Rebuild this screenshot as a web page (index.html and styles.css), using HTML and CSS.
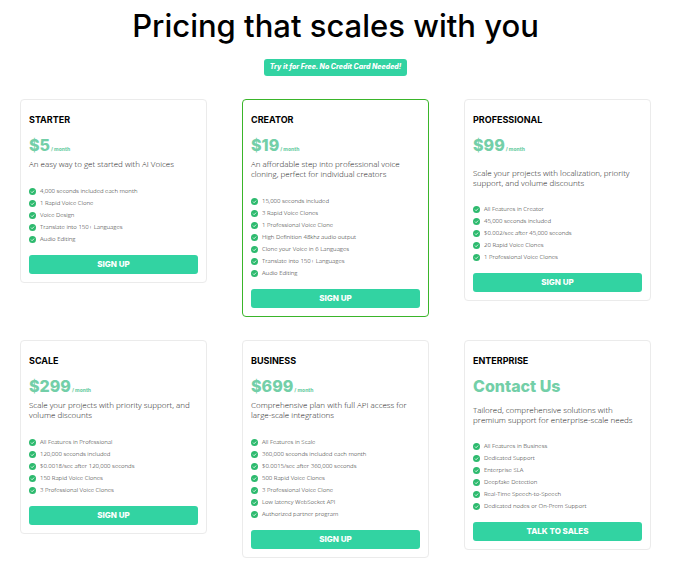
FILE: index.html
```html
<!DOCTYPE html>
<html lang="en">
<head>
<meta charset="utf-8">
<meta name="viewport" content="width=device-width, initial-scale=1">
<title>Pricing</title>
<link rel="stylesheet" href="styles.css">
</head>
<body>
<svg class="sprite" aria-hidden="true">
  <symbol id="check" viewBox="0 0 14 14">
    <circle cx="7" cy="7" r="7" fill="#2dba6e"/>
    <path d="M4 7.2 6.2 9.4 10.2 5.2" fill="none" stroke="#fff" stroke-width="1.6"/>
  </symbol>
</svg>
<main class="pricing">
  <header class="intro">
    <h1>Pricing that scales with you</h1>
    <a class="trial" href="#">Try it for Free. No Credit Card Needed!</a>
  </header>
  <div class="plans">
    <section class="plan">
      <h2>STARTER</h2>
      <p class="price">$5<small>/ month</small></p>
      <p class="summary">An easy way to get started with AI Voices</p>
      <ul>
        <li><svg><use href="#check"/></svg><span>4,000 seconds included each month</span></li>
        <li><svg><use href="#check"/></svg><span>1 Rapid Voice Clone</span></li>
        <li><svg><use href="#check"/></svg><span>Voice Design</span></li>
        <li><svg><use href="#check"/></svg><span>Translate into 150+ Languages</span></li>
        <li><svg><use href="#check"/></svg><span>Audio Editing</span></li>
      </ul>
      <button type="button">SIGN UP</button>
    </section>
    <section class="plan featured">
      <h2>CREATOR</h2>
      <p class="price">$19<small>/ month</small></p>
      <p class="summary">An affordable step into professional voice cloning, perfect for individual creators</p>
      <ul>
        <li><svg><use href="#check"/></svg><span>15,000 seconds included</span></li>
        <li><svg><use href="#check"/></svg><span>3 Rapid Voice Clones</span></li>
        <li><svg><use href="#check"/></svg><span>1 Professional Voice Clone</span></li>
        <li><svg><use href="#check"/></svg><span>High Definition 48khz audio output</span></li>
        <li><svg><use href="#check"/></svg><span>Clone your Voice in 6 Languages</span></li>
        <li><svg><use href="#check"/></svg><span>Translate into 150+ Languages</span></li>
        <li><svg><use href="#check"/></svg><span>Audio Editing</span></li>
      </ul>
      <button type="button">SIGN UP</button>
    </section>
    <section class="plan roomy">
      <h2>PROFESSIONAL</h2>
      <p class="price">$99<small>/ month</small></p>
      <p class="summary">Scale your projects with localization, priority support, and volume discounts</p>
      <ul>
        <li><svg><use href="#check"/></svg><span>All Features in Creator</span></li>
        <li><svg><use href="#check"/></svg><span>45,000 seconds included</span></li>
        <li><svg><use href="#check"/></svg><span>$0.002/sec after 45,000 seconds</span></li>
        <li><svg><use href="#check"/></svg><span>20 Rapid Voice Clones</span></li>
        <li><svg><use href="#check"/></svg><span>1 Professional Voice Clones</span></li>
      </ul>
      <button type="button">SIGN UP</button>
    </section>
    <section class="plan">
      <h2>SCALE</h2>
      <p class="price">$299<small>/ month</small></p>
      <p class="summary">Scale your projects with priority support, and volume discounts</p>
      <ul>
        <li><svg><use href="#check"/></svg><span>All Features in Professional</span></li>
        <li><svg><use href="#check"/></svg><span>120,000 seconds included</span></li>
        <li><svg><use href="#check"/></svg><span>$0.0018/sec after 120,000 seconds</span></li>
        <li><svg><use href="#check"/></svg><span>150 Rapid Voice Clones</span></li>
        <li><svg><use href="#check"/></svg><span>3 Professional Voice Clones</span></li>
      </ul>
      <button type="button">SIGN UP</button>
    </section>
    <section class="plan">
      <h2>BUSINESS</h2>
      <p class="price">$699<small>/ month</small></p>
      <p class="summary">Comprehensive plan with full API access for large-scale integrations</p>
      <ul>
        <li><svg><use href="#check"/></svg><span>All Features in Scale</span></li>
        <li><svg><use href="#check"/></svg><span>360,000 seconds included each month</span></li>
        <li><svg><use href="#check"/></svg><span>$0.0015/sec after 360,000 seconds</span></li>
        <li><svg><use href="#check"/></svg><span>500 Rapid Voice Clones</span></li>
        <li><svg><use href="#check"/></svg><span>3 Professional Voice Clone</span></li>
        <li><svg><use href="#check"/></svg><span>Low latency WebSocket API</span></li>
        <li><svg><use href="#check"/></svg><span>Authorized partner program</span></li>
      </ul>
      <button type="button">SIGN UP</button>
    </section>
    <section class="plan contact">
      <h2>ENTERPRISE</h2>
      <p class="price">Contact Us</p>
      <p class="summary">Tailored, comprehensive solutions with premium support for enterprise-scale needs</p>
      <ul>
        <li><svg><use href="#check"/></svg><span>All Features in Business</span></li>
        <li><svg><use href="#check"/></svg><span>Dedicated Support</span></li>
        <li><svg><use href="#check"/></svg><span>Enterprise SLA</span></li>
        <li><svg><use href="#check"/></svg><span>Deepfake Detection</span></li>
        <li><svg><use href="#check"/></svg><span>Real-Time Speech-to-Speech</span></li>
        <li><svg><use href="#check"/></svg><span>Dedicated nodes or On-Prem Support</span></li>
      </ul>
      <button type="button">TALK TO SALES</button>
    </section>
  </div>
</main>
</body>
</html>
```

FILE: styles.css
```css
* {
  box-sizing: border-box;
  margin: 0;
  padding: 0;
}

body {
  background: #fff;
  color: #000;
  font-family: Inter, "Liberation Sans", sans-serif;
}

.sprite {
  position: absolute;
  width: 0;
  height: 0;
}

.pricing {
  padding: 4px 23px 14px 20px;
}

.intro {
  display: flex;
  flex-direction: column;
  align-items: center;
  gap: 11px;
  margin-bottom: 23px;
}

h1 {
  font-size: 31px;
  font-weight: 500;
  line-height: 44px;
}

.trial {
  padding: 0 6px 2px;
  border-radius: 3px;
  background: #32d3a2;
  color: #fff;
  font-size: 7px;
  font-style: italic;
  font-weight: 800;
  line-height: 15px;
  text-decoration: none;
}

.plans {
  display: grid;
  grid-template-columns: repeat(3, 1fr);
  align-items: start;
  gap: 23px 35px;
}

.plan {
  padding: 14px 8px 8px;
  border: 1px solid #ebebeb;
  border-radius: 4px;
}

.featured {
  border-color: #3ab52a;
}

h2 {
  font-size: 9px;
  font-weight: 700;
  line-height: 12px;
}

.price {
  margin-top: 7px;
  color: #73cfa8;
  font-size: 16px;
  font-weight: 800;
  line-height: 24px;
}

.price small {
  margin-left: 1px;
  font-size: 5px;
  line-height: 5px;
}

.summary {
  margin-top: 2px;
  color: #222;
  font-family: "Open Sans", sans-serif;
  font-size: 8px;
  font-weight: 300;
  line-height: 10px;
}

.roomy .summary {
  margin-top: 11px;
}

.contact .summary {
  margin-top: 7px;
}

ul {
  margin: 16px 0 10px;
  list-style: none;
}

.roomy ul,
.contact ul {
  margin-top: 15px;
}

li {
  display: flex;
  align-items: center;
  gap: 4px;
  height: 12px;
  color: #222;
  font-family: "Open Sans", sans-serif;
  font-size: 6px;
  font-weight: 300;
  line-height: 10px;
}

li svg {
  width: 7px;
  height: 7px;
}

button {
  display: block;
  width: 100%;
  height: 19px;
  padding-bottom: 2px;
  border: 0;
  border-radius: 3px;
  background: #32d3a2;
  color: #fff;
  font-family: inherit;
  font-size: 8px;
  font-weight: 800;
}
```
